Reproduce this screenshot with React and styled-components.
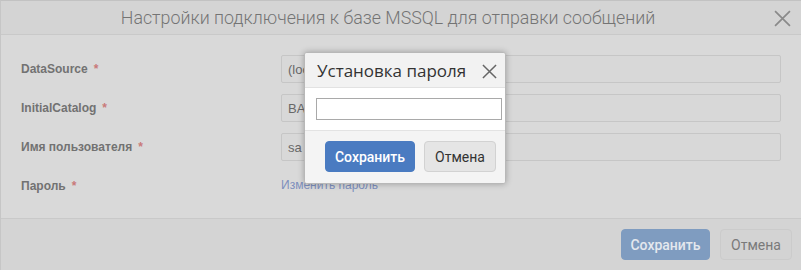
import React from "react";
import styled, { createGlobalStyle } from "styled-components";

const Global = createGlobalStyle`
  html, body { margin: 0; padding: 0; background: #d9d9d9; }
  body { font-family: "Liberation Sans", Arial, sans-serif; }
  * { box-sizing: border-box; }
`;

const Dialog = styled.div`
  position: relative;
  width: 801px;
  height: 270px;
  background: #d9d9d9;
  border-top: 1px solid #c2c2c2;
  border-left: 1px solid #c6c6c6;
  display: flex;
  flex-direction: column;
  overflow: hidden;
`;

const Header = styled.div`
  height: 34px;
  flex: none;
  background: #d4d4d4;
  border-bottom: 1px solid #c9c9c9;
  display: flex;
  align-items: center;
  justify-content: center;
  position: relative;
`;

const Title = styled.div`
  font-family: "Roboto", "Open Sans", sans-serif;
  font-size: 17.8px;
  font-weight: 300;
  color: #747474;
  margin-right: 26px;
`;

const CloseIcon = styled.svg`
  position: absolute;
  right: ${(p) => p.$right}px;
  top: ${(p) => p.$top}px;
  width: ${(p) => p.$size}px;
  height: ${(p) => p.$size}px;
  stroke: ${(p) => p.$color};
  stroke-width: 1.6;
  fill: none;
`;

const Body = styled.div`
  flex: 1;
  padding: 20px 20px 0 20px;
  display: flex;
  flex-direction: column;
  gap: 11px;
`;

const Row = styled.div`
  display: grid;
  grid-template-columns: 260px 500px;
  align-items: center;
  height: 28px;
`;

const Label = styled.div`
  font-size: 12px;
  font-weight: bold;
  color: #727272;
`;

const Star = styled.span`
  color: #c97a7a;
  margin-left: 6px;
  font-weight: bold;
`;

const Field = styled.div`
  height: 28px;
  border: 1px solid #c6c6c6;
  border-radius: 2px;
  background: #d8d8d8;
  font-size: 13px;
  color: #686868;
  padding: 0 6px;
  display: flex;
  align-items: center;
  overflow: hidden;
  white-space: nowrap;
`;

const Link = styled.span`
  font-size: 12px;
  color: #7d8fbd;
  margin-top: -3px;
`;

const Footer = styled.div`
  height: 52px;
  flex: none;
  border-top: 1px solid #c9c9c9;
  background: #d4d4d4;
  display: flex;
  justify-content: flex-end;
  align-items: flex-start;
  padding: 10px 9px 0 0;
  gap: 10px;
`;

const Button = styled.div`
  height: 31px;
  width: ${(p) => p.$w}px;
  border-radius: 4px;
  display: flex;
  align-items: center;
  justify-content: center;
  font-family: "Roboto", "Liberation Sans", sans-serif;
  font-size: 14px;
  font-weight: ${(p) => (p.$primary ? 500 : 400)};
  background: ${(p) => p.$bg};
  color: ${(p) => p.$fg};
  border: 1px solid ${(p) => p.$border};
`;

const Modal = styled.div`
  position: absolute;
  left: 303px;
  top: 51px;
  width: 202px;
  height: 132px;
  background: #f4f4f4;
  border: 1px solid #b8b8b8;
  border-radius: 3px;
  box-shadow: 0 0 6px rgba(0, 0, 0, 0.28);
  display: flex;
  flex-direction: column;
  overflow: hidden;
`;

const ModalHeader = styled.div`
  height: 35px;
  flex: none;
  background: #f2f2f2;
  border-bottom: 1px solid #e2e2e2;
  display: flex;
  align-items: center;
  padding-left: 12px;
  position: relative;
`;

const ModalTitle = styled.div`
  font-family: "Open Sans", "Roboto", sans-serif;
  font-size: 17px;
  color: #333;
`;

const ModalBody = styled.div`
  height: 43px;
  flex: none;
  background: #fff;
  border-bottom: 1px solid #e3e3e3;
  padding: 10px 0 0 11px;
`;

const PwInput = styled.input`
  width: 186px;
  height: 22px;
  border: 1px solid #a9a9a9;
  background: #fff;
  margin: 0;
  padding: 0 4px;
  outline: none;
`;

const ModalFooter = styled.div`
  flex: 1;
  background: #f4f4f4;
  display: flex;
  align-items: flex-start;
  padding: 10px 0 0 20px;
  gap: 9px;
`;

const X = ({ right, top, size, color }) => (
  <CloseIcon $right={right} $top={top} $size={size} $color={color} viewBox="0 0 16 16">
    <path d="M1 1 L15 15 M15 1 L1 15" />
  </CloseIcon>
);

const rows = [
  { label: "DataSource", value: "(local)\\SQLEXPRESS" },
  { label: "InitialCatalog", value: "BASE" },
  { label: "Имя пользователя", value: "sa" },
];

export default function App() {
  return (
    <>
      <Global />
      <Dialog>
        <Header>
          <Title>Настройки подключения к базе MSSQL для отправки сообщений</Title>
          <X right={10} top={9} size={17} color="#8a8a8a" />
        </Header>
        <Body>
          {rows.map((r) => (
            <Row key={r.label}>
              <Label>
                {r.label}
                <Star>*</Star>
              </Label>
              <Field>{r.value}</Field>
            </Row>
          ))}
          <Row>
            <Label>
              Пароль
              <Star>*</Star>
            </Label>
            <Link>Изменить пароль</Link>
          </Row>
        </Body>
        <Footer>
          <Button $w={89} $bg="#7f9cc0" $fg="#e4e8ee" $border="#7f9cc0" $primary>
            Сохранить
          </Button>
          <Button $w={72} $bg="#d3d3d3" $fg="#7a7a7a" $border="#cbcbcb">
            Отмена
          </Button>
        </Footer>
        <Modal>
          <ModalHeader>
            <ModalTitle>Установка пароля</ModalTitle>
            <X right={8} top={11} size={15} color="#666" />
          </ModalHeader>
          <ModalBody>
            <PwInput type="password" />
          </ModalBody>
          <ModalFooter>
            <Button $w={90} $bg="#4a7bc1" $fg="#ffffff" $border="#4a7bc1" $primary>
              Сохранить
            </Button>
            <Button $w={72} $bg="#e5e5e5" $fg="#333" $border="#d2d2d2">
              Отмена
            </Button>
          </ModalFooter>
        </Modal>
      </Dialog>
    </>
  );
}
